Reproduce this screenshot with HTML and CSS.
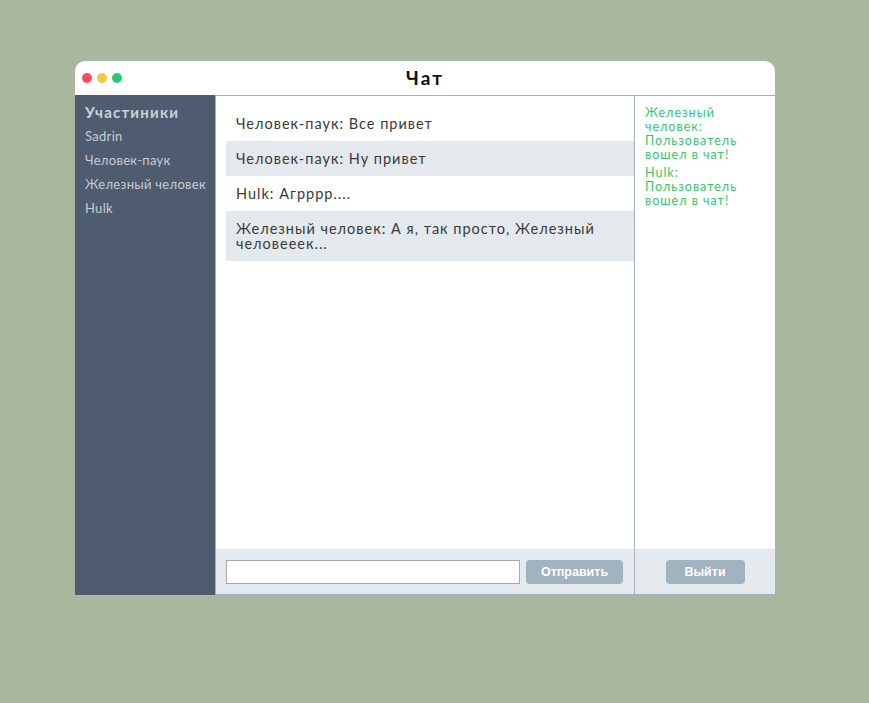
FILE: index.html
```html
<!DOCTYPE html>
<html lang="ru">
<head>
<meta charset="utf-8">
<title>Чат</title>
<link rel="stylesheet" href="styles.css">
</head>
<body>
<div class="window">
  <header class="titlebar">
    <div class="dots">
      <span class="dot red"></span>
      <span class="dot yellow"></span>
      <span class="dot green"></span>
    </div>
    <h1 class="title">Чат</h1>
    <div class="spacer"></div>
  </header>
  <div class="body">
    <aside class="sidebar">
      <h2 class="sidebar-title">Участиники</h2>
      <ul class="users">
        <li>Sadrin</li>
        <li>Человек-паук</li>
        <li>Железный человек</li>
        <li>Hulk</li>
      </ul>
    </aside>
    <section class="chat">
      <div class="messages">
        <div class="msg">Человек-паук: Все привет</div>
        <div class="msg alt">Человек-паук: Ну привет</div>
        <div class="msg">Hulk: Агрррр....</div>
        <div class="msg alt">Железный человек: А я, так просто, Железный человееек...</div>
      </div>
      <div class="footer">
        <input class="input" type="text">
        <button class="btn send">Отправить</button>
      </div>
    </section>
    <section class="events">
      <div class="event-list">
        <p class="event">Железный человек: Пользователь вошел в чат!</p>
        <p class="event">Hulk: Пользователь вошел в чат!</p>
      </div>
      <div class="footer center">
        <button class="btn exit">Выйти</button>
      </div>
    </section>
  </div>
</div>
</body>
</html>
```
FILE: styles.css
```css
* { box-sizing: border-box; }
html, body { margin: 0; padding: 0; }
body {
  background: #a9b79e;
  font-family: "Lato", "Noto Sans", sans-serif;
  padding: 61px 0 0 75px;
}
.window {
  width: 700px;
  display: flex;
  flex-direction: column;
}
.titlebar {
  height: 34px;
  background: #fff;
  border-radius: 10px 10px 0 0;
  display: grid;
  grid-template-columns: 1fr auto 1fr;
  align-items: center;
}
.dots {
  display: flex;
  gap: 5px;
  padding-left: 7px;
}
.dot {
  width: 10px;
  height: 10px;
  border-radius: 50%;
}
.red { background: #fb4a5b; }
.yellow { background: #fdc640; }
.green { background: #2acb70; }
.title {
  margin: 0;
  font-size: 19px;
  font-weight: 700;
  letter-spacing: 2px;
  color: #111;
  line-height: 32px;
}
.body {
  display: flex;
  height: 500px;
}
.sidebar {
  width: 140px;
  background: #4f5b6e;
  padding: 8px 10px;
  color: #c6ccd4;
}
.sidebar-title {
  margin: 0;
  font-size: 15px;
  font-weight: 700;
  letter-spacing: 1.2px;
  line-height: 18px;
  color: #cdd2d9;
  white-space: nowrap;
}
.users {
  list-style: none;
  margin: 3px 0 0;
  padding: 0;
}
.users li {
  font-size: 13px;
  letter-spacing: 0.3px;
  line-height: 24px;
  white-space: nowrap;
}
.chat {
  flex: 1;
  display: flex;
  flex-direction: column;
  background: #fff;
  border: 1px solid #a0b3c0;
  border-right: none;
}
.messages {
  flex: 1;
  padding: 10px 0 0 10px;
}
.msg {
  padding: 10px;
  font-size: 14.5px;
  letter-spacing: 1px;
  line-height: 15px;
  color: #3a3a3a;
}
.msg.alt { background: #e4e9ed; }
.footer {
  height: 45px;
  background: #e4e9ed;
  display: flex;
  align-items: center;
  padding: 0 11px 0 10px;
  gap: 6px;
}
.footer.center { justify-content: center; padding: 0; }
.input {
  width: 294px;
  height: 24px;
  border: 1px solid #a9a9a9;
  background: #fff;
  margin: 0;
}
.btn {
  height: 24px;
  border: none;
  border-radius: 4px;
  background: #a0b3bf;
  color: #fff;
  font-family: "Liberation Sans", Arial, sans-serif;
  font-size: 12.5px;
  font-weight: 700;
  padding: 0;
}
.send { width: 97px; }
.exit { width: 79px; }
.events {
  width: 141px;
  display: flex;
  flex-direction: column;
  background: #fff;
  border-top: 1px solid #a0b3c0;
  border-bottom: 1px solid #a0b3c0;
  border-left: 1px solid #a0b3c0;
}
.event-list {
  flex: 1;
  padding: 10px 10px 0;
}
.event {
  margin: 0 0 4px;
  font-size: 12.5px;
  letter-spacing: 1px;
  line-height: 14px;
  color: #35c76a;
}
```
